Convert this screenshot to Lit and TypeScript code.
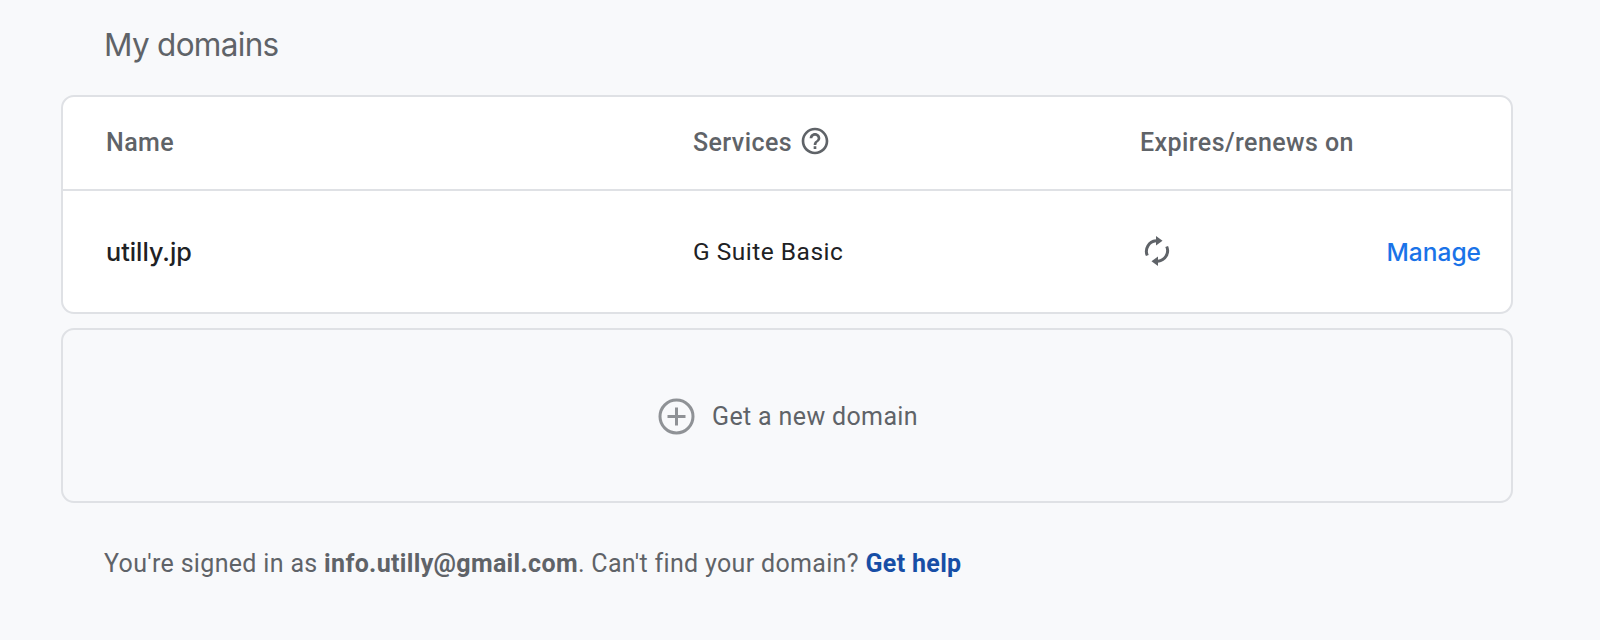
import { LitElement, html, css } from "lit";
import { customElement } from "lit/decorators.js";

@customElement("app-root")
export class AppRoot extends LitElement {
  static styles = css`
    :host { display: block; width: 1600px; height: 640px; background: #f8f9fb; font-family: Roboto, "Noto Sans", sans-serif; overflow: hidden; }
    .page { padding: 24px 87px 0 61px; display: flex; flex-direction: column; }
    h1 { margin: 0 0 29px 43px; font: 400 31.5px/42px Inter, Roboto, sans-serif; letter-spacing: -0.7px; color: #5f6368; }
    .card { border: 2px solid #dfe1e5; border-radius: 13px; background: #fff; box-sizing: border-box; }
    .row { display: grid; grid-template-columns: 587px 447px 1fr; align-items: center; padding: 0 30px 0 43px; box-sizing: border-box; }
    .head { height: 94px; padding-bottom: 1px; border-bottom: 2px solid #dfe1e5; color: #5f6368; font-size: 25px; font-weight: 500; letter-spacing: 0.42px; }
    .body { height: 121px; font-size: 24px; color: #202124; }
    .name { font: 500 25.2px Inter, Roboto, sans-serif; letter-spacing: 0; }
    .svc { display: flex; align-items: center; gap: 7px; }
    .help { margin-top: -3px; }
    .sync { margin-top: -2px; }
    .svc-text { letter-spacing: 0.5px; font-size: 24.5px; }
    .exp { display: flex; align-items: center; justify-content: space-between; padding-left: 1px; }
    .manage { color: #1a73e8; font: 500 24.5px Inter, Roboto, sans-serif; letter-spacing: 0; }
    svg { display: block; }
    .new { margin-top: 14px; height: 175px; padding-top: 1px; padding-left: 2px; background: #f8f9fb; display: flex; align-items: center; justify-content: center; gap: 17px; color: #5f6368; font-size: 25px; letter-spacing: 0.35px; }
    .foot { margin: 45px 0 0 43px; font-size: 25px; line-height: 32px; color: #5f6368; letter-spacing: 0.33px; }
    .foot b { font-weight: 700; }
    .foot a { color: #174ea6; font-weight: 700; text-decoration: none; }
  `;

  render() {
    return html`
      <div class="page">
        <h1>My domains</h1>
        <div class="card">
          <div class="row head">
            <div>Name</div>
            <div class="svc">Services
              <svg class="help" width="32" height="32" viewBox="0 0 24 24" fill="#5f6368"><path d="M11 18h2v-2h-2v2zm1-16C6.48 2 2 6.48 2 12s4.48 10 10 10 10-4.48 10-10S17.520 2 12 2zm0 18c-4.410 0-8-3.590-8-8s3.590-8 8-8 8 3.590 8 8-3.590 8-8 8zm0-14c-2.210 0-4 1.790-4 4h2c0-1.100.9-2 2-2s2 .9 2 2c0 2-3 1.750-3 5h2c0-2.250 3-2.500 3-5 0-2.210-1.790-4-4-4z"/></svg>
            </div>
            <div>Expires/renews on</div>
          </div>
          <div class="row body">
            <div class="name">utilly.jp</div>
            <div class="svc-text">G Suite Basic</div>
            <div class="exp">
              <svg class="sync" width="32" height="32" viewBox="0 0 32 32" fill="#5f6368"><path d="M6.300 20.500A10.500 10.500 0 0 1 15 5.800" fill="none" stroke="#5f6368" stroke-width="3"/><path d="M15 1 21.500 5.800 15 10.500z"/><path d="M25.700 11.500A10.500 10.500 0 0 1 17 26.200" fill="none" stroke="#5f6368" stroke-width="3"/><path d="M17 31 10.500 26.200 17 21.500z"/></svg>
              <span class="manage">Manage</span>
            </div>
          </div>
        </div>
        <div class="card new">
          <svg width="37" height="37" viewBox="0 0 37 37" fill="none" stroke="#8f9296" stroke-width="3"><circle cx="18.5" cy="18.5" r="16.5"/><path d="M18.500 9.500v18M9.500 18.500h18"/></svg>
          <span>Get a new domain</span>
        </div>
        <div class="foot">You're signed in as <b>info.utilly@gmail.com</b>. Can't find your domain? <a>Get help</a></div>
      </div>
    `;
  }
}
